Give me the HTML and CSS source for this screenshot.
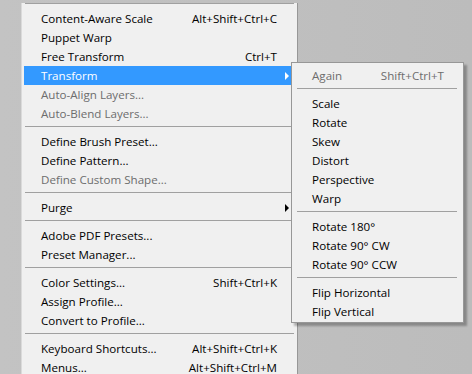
FILE: index.html
```html
<!doctype html>
<html>
<head>
<meta charset="utf-8">
<title>Edit menu</title>
<link rel="stylesheet" href="styles.css">
</head>
<body>
<div class="desk">
	<ul class="menu">
		<li class="sep"></li>
		<li><span>Content-Aware Scale</span><em>Alt+Shift+Ctrl+C</em></li>
		<li><span>Puppet Warp</span></li>
		<li><span>Free Transform</span><em>Ctrl+T</em></li>
		<li class="on sub"><span>Transform</span><em></em><i></i></li>
		<li class="off"><span>Auto-Align Layers...</span></li>
		<li class="off"><span>Auto-Blend Layers...</span></li>
		<li class="sep"></li>
		<li><span>Define Brush Preset...</span></li>
		<li><span>Define Pattern...</span></li>
		<li class="off"><span>Define Custom Shape...</span></li>
		<li class="sep"></li>
		<li class="sub"><span>Purge</span><em></em><i></i></li>
		<li class="sep"></li>
		<li><span>Adobe PDF Presets...</span></li>
		<li><span>Preset Manager...</span></li>
		<li class="sep"></li>
		<li><span>Color Settings...</span><em>Shift+Ctrl+K</em></li>
		<li><span>Assign Profile...</span></li>
		<li><span>Convert to Profile...</span></li>
		<li class="sep"></li>
		<li><span>Keyboard Shortcuts...</span><em>Alt+Shift+Ctrl+K</em></li>
		<li><span>Menus...</span><em>Alt+Shift+Ctrl+M</em></li>
	</ul>
	<ul class="menu submenu">
		<li class="off"><span>Again</span><em>Shift+Ctrl+T</em></li>
		<li class="sep"></li>
		<li><span>Scale</span></li>
		<li><span>Rotate</span></li>
		<li><span>Skew</span></li>
		<li><span>Distort</span></li>
		<li><span>Perspective</span></li>
		<li><span>Warp</span></li>
		<li class="sep"></li>
		<li><span>Rotate 180°</span></li>
		<li><span>Rotate 90° CW</span></li>
		<li><span>Rotate 90° CCW</span></li>
		<li class="sep"></li>
		<li><span>Flip Horizontal</span></li>
		<li><span>Flip Vertical</span></li>
	</ul>
</div>
</body>
</html>
```

FILE: styles.css
```css
*{margin:0; padding:0; list-style:none;}
body{background:#bfbfbf; font-family:"Open Sans","Noto Sans",sans-serif; font-size:11.6px; color:#000; overflow:hidden;}
.desk{position:relative; display:flow-root; width:472px; height:374px; background:linear-gradient(90deg,#c3c3c3,#bcbcbc);}
.menu{margin-left:21px; width:270px; padding:0 3px 0 2px; background:#f0f0f0; border-left:1px solid #dadada; border-right:1px solid #979797;}
.menu li{display:grid; grid-template-columns:1fr auto 15px; height:19px; line-height:20px; padding-left:17px; white-space:nowrap;}
.menu li em{font-style:normal; text-align:right; margin-right:2px;}
.menu li.off{color:#6d6d6d;}
.menu li.on{background:#3399ff; color:#fff;}
.menu li.sub i{align-self:center; justify-self:center; width:0; height:0; border-left:4px solid #000; border-top:4px solid transparent; border-bottom:4px solid transparent;}
.menu li.on.sub i{border-left-color:#fff;}
.menu li.sep{display:block; height:1px; padding:0; margin:3px 0 5px 1px; background:#a0a0a0;}
.submenu{position:absolute; left:291px; top:62px; margin:0; width:166px; padding:3px 3px 1px 2px; border:1px solid #979797; box-shadow:3px 3px 2px rgba(0,0,0,0.28);}
.submenu li{grid-template-columns:1fr auto; padding:0 16px 0 18px;}
.submenu li em{margin-right:0;}
.submenu li.sep{margin:3px 3px 5px 3px;}
```
